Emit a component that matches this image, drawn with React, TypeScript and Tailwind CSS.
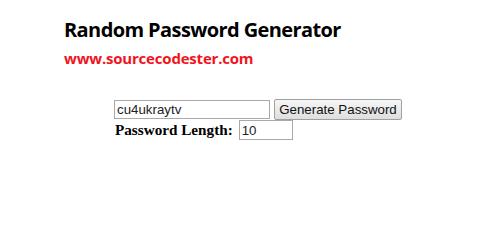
export default function App() {
  return (
    <div className="h-[202px] w-[500px] bg-white pl-[64px] pt-[16px]">
      <h1 className="font-['Open_Sans',sans-serif] text-[20px] font-bold leading-[28px] tracking-[-0.6px] text-black">
        Random Password Generator
      </h1>
      <p className="mt-[4px] font-['Open_Sans',sans-serif] text-[15px] font-bold leading-[20px] tracking-[-0.2px] text-[#f0141e]">
        www.sourcecodester.com
      </p>

      <form className="mt-[31px] ml-[50px]" onSubmit={(e) => e.preventDefault()}>
        <div className="flex items-center gap-[4px]">
          <input
            type="text"
            defaultValue="cu4ukraytv"
            className="h-[19px] w-[156px] border border-[#a9a9a9] px-[2px] font-['Liberation_Sans',sans-serif] text-[13.3px] text-[#222] outline-none"
          />
          <button
            type="button"
            className="h-[21px] w-[128px] rounded-[2px] border border-[#a0a0a0] bg-gradient-to-b from-[#f6f6f6] to-[#dedede] font-['Liberation_Sans',sans-serif] text-[13.3px] leading-none text-[#111]"
          >
            Generate Password
          </button>
        </div>
        <div className="flex items-center">
          <label className="pl-[1px] font-['Liberation_Serif',serif] text-[15.2px] font-bold leading-[20px] text-black">
            Password Length:
          </label>
          <input
            type="text"
            defaultValue="10"
            className="ml-[6px] h-[20px] w-[54px] border border-[#a9a9a9] px-[2px] font-['Liberation_Sans',sans-serif] text-[13.3px] text-[#222] outline-none"
          />
        </div>
      </form>
    </div>
  );
}
